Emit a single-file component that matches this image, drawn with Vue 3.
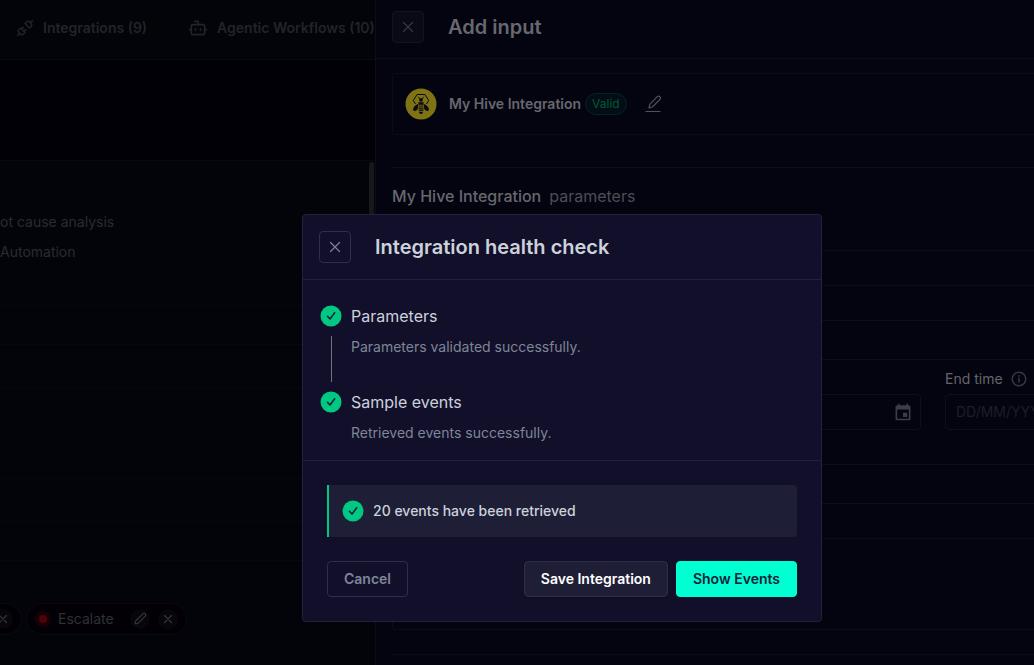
<script setup>
import { ref } from 'vue'

const startTime = ref('')
const endTime = ref('')
const steps = [
  { title: 'Parameters', text: 'Parameters validated successfully.' },
  { title: 'Sample events', text: 'Retrieved events successfully.' },
]
const rows = ['row-a', 'row-b', 'row-c', 'row-d', 'row-e', 'row-f']
</script>

<template>
  <div class="app">
    <main class="workspace">
      <nav class="tabs">
        <a href="#integrations" class="tab">
          <svg width="18" height="18" viewBox="0 0 24 24" class="line-icon">
            <path d="M19 5l3-3M2 22l3-3M6.300 20.300a2.400 2.400 0 0 0 3.400 0L12 18l-6-6-2.300 2.300a2.400 2.400 0 0 0 0 3.400zM7.500 13.500 10 11M10.500 16.500 13 14M12 6l6 6 2.300-2.300a2.400 2.400 0 0 0 0-3.400l-2.600-2.600a2.400 2.400 0 0 0-3.400 0z" />
          </svg>
          <span>Integrations (9)</span>
        </a>
        <a href="#workflows" class="tab">
          <svg width="20" height="20" viewBox="0 0 24 24" class="line-icon">
            <path d="M12 8V4H8M2 14h2M20 14h2M15 13v2M9 13v2" />
            <rect x="4" y="8" width="16" height="12" rx="2" />
          </svg>
          <span>Agentic Workflows (10)</span>
        </a>
      </nav>
      <div class="banner"></div>
      <section class="list">
        <div class="scroll-thumb"></div>
        <div class="intro">
          <p>ot cause analysis</p>
          <p>Automation</p>
        </div>
        <div v-for="r in rows" :key="r" :class="['row', r]"></div>
        <div class="chips">
          <div class="chip chip-cut">
            <button class="chip-btn" aria-label="Remove">
              <svg width="16" height="16" viewBox="0 0 16 16" class="thin-icon"><path d="M4.500 4.500l7 7M11.500 4.500l-7 7" /></svg>
            </button>
          </div>
          <div class="chip">
            <span class="dot"></span>
            <span class="chip-label">Escalate</span>
            <button class="chip-btn" aria-label="Edit Escalate">
              <svg width="16" height="16" viewBox="0 0 16 16" class="thin-icon"><path d="M3 13l.6-3L10.800 2.800a1.500 1.500 0 0 1 2.400 2.400L6 12.400z" /></svg>
            </button>
            <button class="chip-btn" aria-label="Remove Escalate">
              <svg width="16" height="16" viewBox="0 0 16 16" class="thin-icon"><path d="M4.500 4.500l7 7M11.500 4.500l-7 7" /></svg>
            </button>
          </div>
        </div>
      </section>
    </main>

    <aside class="drawer">
      <header class="drawer-head">
        <button class="close" aria-label="Close panel">
          <svg width="16" height="16" viewBox="0 0 16 16" class="thin-icon"><path d="M3.500 3.500l9 9M12.500 3.500l-9 9" /></svg>
        </button>
        <h2>Add input</h2>
      </header>
      <div class="drawer-body">
        <div class="card">
          <svg width="32" height="32" viewBox="0 0 32 32" class="bee">
            <circle cx="16" cy="16" r="15.500" fill="#7f7413" />
            <g fill="none" stroke="#0c0a12" stroke-width="1">
              <path d="M10.500 16L8.300 12.500l3.700-6h8l3.700 6L21.500 16" />
              <path d="M13.200 8.800l1.600 1.900M18.800 8.800l-1.600 1.900" />
            </g>
            <g fill="#0c0a12">
              <circle cx="16" cy="11.800" r="1.900" />
              <path d="M13 14.200h6l-1 2.600h-4z" />
              <path d="M13.600 16c-3 .4-5.400 3-5.600 6 1.600 2 4.300.6 4.900-1.800z" />
              <path d="M18.400 16c3 .4 5.400 3 5.600 6-1.600 2-4.300.6-4.900-1.800z" />
              <path d="M14 17.500h4v1.100h-4zM13.500 19.500h5v1.200h-5zM13.500 21.600h5v1.200h-5zM13.900 23.700h4.200c-.4 1.500-1.200 2.200-2.100 2.400-.9-.2-1.700-.9-2.100-2.400z" />
            </g>
          </svg>
          <strong class="card-name">My Hive Integration</strong>
          <span class="valid">Valid</span>
          <button class="edit" aria-label="Edit name">
            <svg width="18" height="18" viewBox="0 0 18 18" class="edit-icon">
              <path d="M4 13l.8-3.700L12.300 1.700a1.700 1.700 0 0 1 2.600 2.600L7.400 12z" />
              <path d="M1 16.500h14" />
            </svg>
          </button>
        </div>
        <hr class="rule" />
        <h3 class="params"><strong>My Hive Integration</strong><span>parameters</span></h3>
        <div class="box">
          <div class="line h35"></div>
          <div class="line h35"></div>
          <div class="line h39"></div>
          <div class="fields">
            <div class="field">
              <label for="start">Start time</label>
              <div class="date">
                <input id="start" v-model="startTime" type="text" placeholder="DD/MM/YYYY hh:mm" />
                <svg width="20" height="20" viewBox="0 0 24 24" class="calendar"><path d="M19 4h-1V2h-2v2H8V2H6v2H5c-1.110 0-1.990.9-1.990 2L3 20a2 2 0 0 0 2 2h14c1.100 0 2-.9 2-2V6c0-1.100-.9-2-2-2zm0 16H5V9h14v11zm-2-7h-5v5h5v-5z" /></svg>
              </div>
            </div>
            <div class="field">
              <label for="end">End time
                <svg width="16" height="16" viewBox="0 0 16 16" class="info"><circle cx="8" cy="8" r="6.800" /><path d="M8 7.300V11M8 4.800v.4" /></svg>
              </label>
              <div class="date">
                <input id="end" v-model="endTime" type="text" placeholder="DD/MM/YYYY hh:mm" />
              </div>
            </div>
          </div>
          <div class="line h39"></div>
          <div class="line h35"></div>
        </div>
        <hr class="rule rule-end" />
      </div>
    </aside>

    <div class="overlay">
      <section class="modal" role="dialog" aria-modal="true" aria-labelledby="dialog-title">
        <header class="modal-head">
          <button class="close" aria-label="Close">
            <svg width="16" height="16" viewBox="0 0 16 16" class="thin-icon"><path d="M3.500 3.500l9 9M12.500 3.500l-9 9" /></svg>
          </button>
          <h2 id="dialog-title">Integration health check</h2>
        </header>
        <ol class="steps">
          <li v-for="s in steps" :key="s.title" class="step">
            <svg width="22" height="22" viewBox="0 0 22 22" class="check"><circle cx="11" cy="11" r="10.500" /><path d="M7.500 11.300l2.500 2.700L14.700 7.800" /></svg>
            <h3>{{ s.title }}</h3>
            <span class="rail"></span>
            <p>{{ s.text }}</p>
          </li>
        </ol>
        <footer class="modal-foot">
          <div class="alert" role="status">
            <svg width="22" height="22" viewBox="0 0 22 22" class="check"><circle cx="11" cy="11" r="10.500" /><path d="M7.500 11.300l2.500 2.700L14.700 7.800" /></svg>
            <span>20 events have been retrieved</span>
          </div>
          <div class="actions">
            <button class="btn ghost">Cancel</button>
            <span class="grow"></span>
            <button class="btn solid">Save Integration</button>
            <button class="btn primary">Show Events</button>
          </div>
        </footer>
      </section>
    </div>
  </div>
</template>

<style>
body {
  background: #03040a;
}
</style>

<style scoped>
* {
  box-sizing: border-box;
}
.app {
  position: relative;
  display: flex;
  min-height: 100vh;
  max-height: 100vh;
  overflow: hidden;
  font-family: Inter, "Liberation Sans", sans-serif;
  font-size: 14px;
  line-height: 20px;
  color: #2a2b30;
}
h2, h3, p, ol {
  margin: 0;
  padding: 0;
  list-style: none;
}
button {
  font: inherit;
  color: inherit;
  padding: 0;
  cursor: pointer;
}
svg {
  flex: none;
  display: block;
}
.line-icon, .thin-icon, .edit-icon, .info {
  fill: none;
  stroke: currentColor;
  stroke-linecap: round;
  stroke-linejoin: round;
}
.line-icon {
  stroke-width: 2;
}
.thin-icon {
  stroke-width: 1.200;
}

/* Workspace */
.workspace {
  flex: 0 0 375px;
  min-width: 0;
  overflow: hidden;
  display: flex;
  flex-direction: column;
  background: #03040a;
}
.tabs {
  flex: none;
  display: flex;
  align-items: center;
  gap: 41px;
  height: 60px;
  padding: 0 0 4px 16px;
  border-bottom: 1px solid #0a090e;
}
.tab {
  display: flex;
  align-items: center;
  gap: 9px;
  color: #222328;
  font-weight: 600;
  text-decoration: none;
  white-space: nowrap;
}
.banner {
  flex: none;
  height: 101px;
  background: #020007;
  border-bottom: 1px solid #08090e;
}
.list {
  position: relative;
  flex: 1;
}
.scroll-thumb {
  position: absolute;
  top: 1px;
  right: 1px;
  width: 5px;
  height: 160px;
  border-radius: 3px;
  background: #18181b;
}
.intro {
  height: 145px;
  padding-top: 51px;
  display: flex;
  flex-direction: column;
  gap: 10px;
  border-bottom: 1px solid #07080d;
}
.row {
  border-bottom: 1px solid #07080d;
}
.row-a { height: 39px; }
.row-b { height: 43px; }
.row-c { height: 91px; }
.row-d { height: 43px; }
.row-e { height: 39px; }
.row-f {
  height: 42px;
  border: 0;
}
.chips {
  display: flex;
  gap: 4px;
}
.chip {
  display: flex;
  align-items: center;
  height: 32px;
  padding: 0 8px;
  border: 1px solid #0a0a10;
  border-radius: 16px;
  background: #020006;
}
.chip-cut {
  width: 22px;
  justify-content: flex-end;
  border-left: 0;
  border-radius: 0 16px 16px 0;
}
.chip-label {
  margin: 0 16px 0 7px;
  color: #303135;
}
.dot {
  width: 16px;
  height: 16px;
  border: 4px solid #160106;
  border-radius: 50%;
  background: #52000a;
}
.chip-btn {
  display: grid;
  place-items: center;
  flex: none;
  width: 20px;
  height: 20px;
  border: 0;
  border-radius: 50%;
  background: #06060b;
  color: #35363a;
}
.chip-btn + .chip-btn {
  margin-left: 8px;
}

/* Drawer */
.drawer {
  flex: 1;
  min-width: 0;
  overflow: hidden;
  background: #040310;
  border-left: 1px solid #0d0d1a;
}
.drawer-head {
  display: flex;
  align-items: center;
  gap: 24px;
  height: 59px;
  padding: 0 16px 5px;
  border-bottom: 1px solid #0d0d18;
  color: #66686d;
}
h2 {
  font-size: 20px;
  line-height: 28px;
  font-weight: 600;
}
.close {
  display: grid;
  place-items: center;
  width: 32px;
  height: 32px;
  border: 1px solid #14141f;
  border-radius: 4px;
  background: #0a0a14;
  color: #373944;
}
.drawer-body {
  padding: 14px 0 0 16px;
}
.card {
  display: flex;
  align-items: center;
  height: 62px;
  padding-left: 12px;
  border: 1px solid #0c0c18;
  border-right: 0;
  border-radius: 4px 0 0 4px;
}
.card-name {
  margin: 0 4px 0 12px;
  color: #66686d;
  font-weight: 600;
}
.valid {
  height: 22px;
  padding: 0 6px;
  border: 1px solid #02251f;
  border-radius: 11px;
  background: #030d16;
  color: #005a3a;
  font-size: 12px;
}
.edit {
  margin-left: 18px;
  border: 0;
  background: none;
  color: #50525c;
}
.edit-icon {
  stroke-width: 1.200;
}
.rule {
  height: 1px;
  margin: 32px 0 0;
  border: 0;
  background: #0d0d18;
}
.rule-end {
  margin-top: 24px;
}
.params {
  display: flex;
  gap: 8px;
  margin: 16px 0 42px;
  font-size: 16px;
  line-height: 24px;
  font-weight: 400;
  color: #4c4e55;
}
.params strong {
  font-weight: 500;
  color: #66686d;
}
.box {
  height: 380px;
  border: 1px solid #0d0d18;
  border-right: 0;
  border-radius: 4px 0 0 4px;
}
.line {
  border-bottom: 1px solid #0d0d18;
}
.h35 { height: 35px; }
.h39 { height: 39px; }
.fields {
  display: flex;
  gap: 24px;
  height: 105px;
  padding: 9px 0 0 16px;
  border-bottom: 1px solid #0d0d18;
}
.field {
  flex: 0 0 512px;
}
.field label {
  display: flex;
  align-items: center;
  gap: 8px;
  height: 20px;
  margin-bottom: 5px;
  color: #64666a;
}
.info {
  stroke-width: 1.500;
  color: #363842;
}
.date {
  display: flex;
  align-items: center;
  height: 36px;
  padding: 0 7px 0 10px;
  border: 1px solid #0f0f1a;
  border-radius: 4px;
}
.date input {
  flex: 1;
  border: 0;
  padding: 0;
  background: none;
  outline: 0;
  font: inherit;
  color: #64666a;
}
.date input::placeholder {
  color: #1d1e26;
  opacity: 1;
}
.calendar {
  fill: #3a3d45;
}

/* Dialog */
.overlay {
  position: absolute;
  inset: 0;
  display: flex;
  align-items: center;
  justify-content: center;
  padding: 171px 0 0 90px;
}
.modal {
  flex: 0 1 520px;
  border: 1px solid #23223c;
  border-radius: 4px;
  background: #120f2a;
  color: #ccd2db;
}
.modal-head {
  display: flex;
  align-items: center;
  gap: 24px;
  padding: 16px;
  border-bottom: 1px solid #23223c;
}
.modal .close {
  border-color: #2e2e48;
  background: transparent;
  color: #7c8199;
}
.steps {
  padding: 25px 17px 16px;
  border-bottom: 1px solid #23223c;
}
.step {
  display: grid;
  grid-template-columns: 22px 1fr;
  column-gap: 9px;
  row-gap: 9px;
}
.step h3 {
  font-size: 16px;
  line-height: 22px;
  font-weight: 400;
}
.step p {
  line-height: 22px;
  color: #7e8698;
}
.step:first-child {
  padding-bottom: 9px;
}
.rail {
  justify-self: center;
  width: 1px;
}
.step:first-child .rail {
  height: 46px;
  background: #6f7388;
}
.check circle {
  fill: #00c781;
}
.check path {
  fill: none;
  stroke: #14213a;
  stroke-width: 1.500;
  stroke-linecap: round;
  stroke-linejoin: round;
}
.modal-foot {
  padding: 24px;
}
.alert {
  display: flex;
  align-items: center;
  gap: 9px;
  height: 52px;
  padding-left: 13px;
  border-left: 2px solid #00c781;
  border-radius: 0 4px 4px 0;
  background: #1e1e37;
  font-weight: 500;
}
.actions {
  display: flex;
  gap: 8px;
  margin-top: 24px;
}
.grow {
  flex: 1;
}
.btn {
  height: 36px;
  padding: 0 16px;
  border: 1px solid #2e2e48;
  border-radius: 4px;
  font-weight: 600;
  white-space: nowrap;
}
.ghost {
  background: transparent;
  color: #7e8698;
}
.solid {
  background: #1e1e37;
  color: #fff;
  box-shadow: 0 1px 2px rgba(0, 0, 0, 0.3);
}
.primary {
  border-color: #00ffd1;
  background: #00ffd1;
  color: #14213a;
}
</style>
